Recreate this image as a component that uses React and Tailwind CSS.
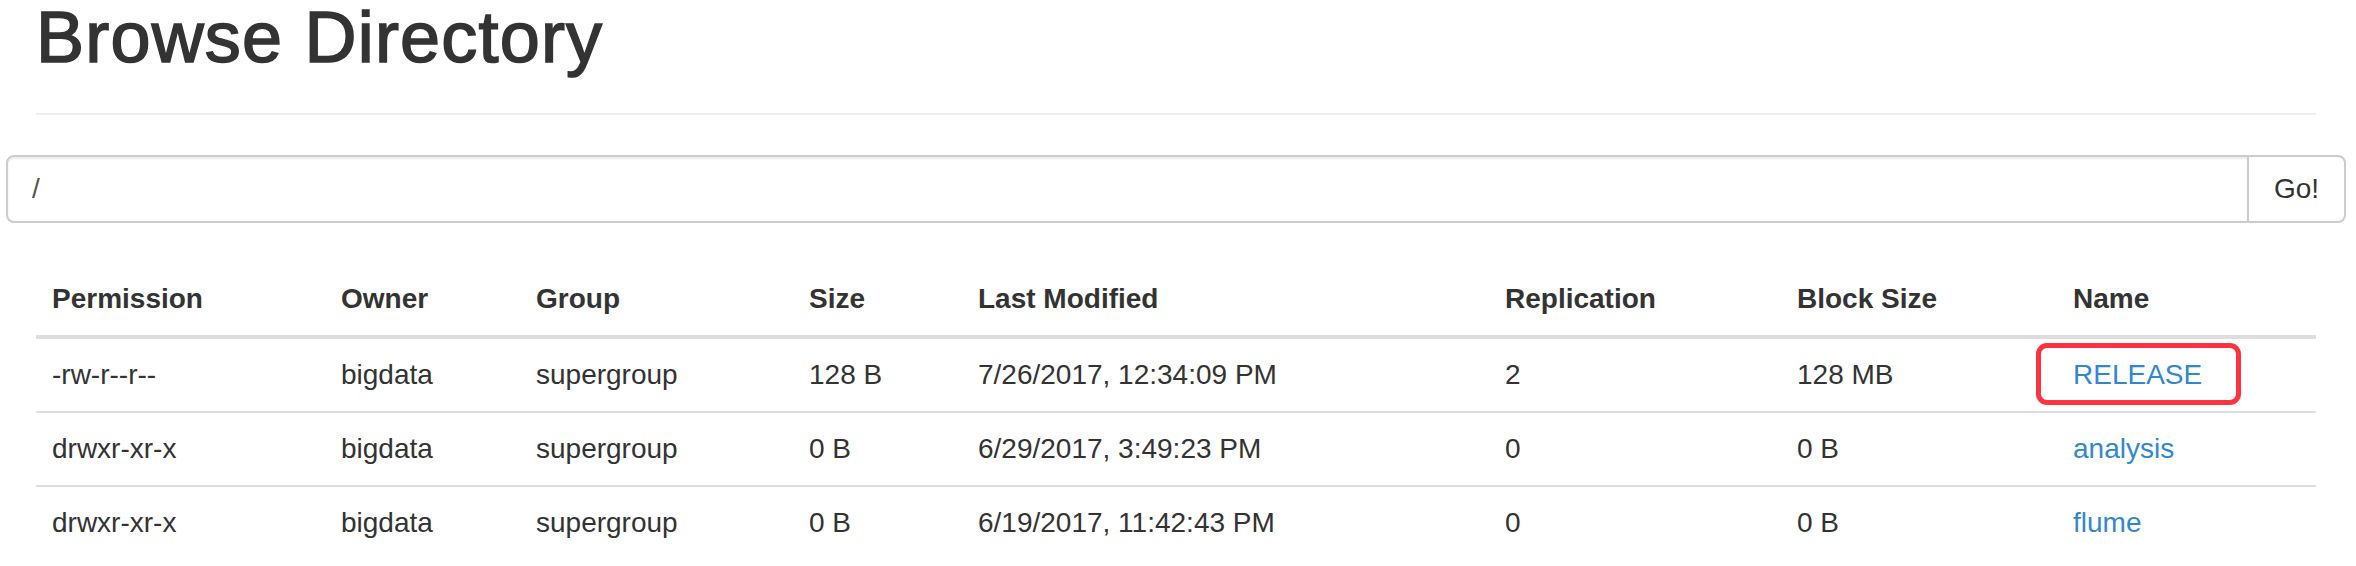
import React from "react";

const columns = [
  { label: "Permission", width: "w-[289px]" },
  { label: "Owner", width: "w-[195px]" },
  { label: "Group", width: "w-[273px]" },
  { label: "Size", width: "w-[169px]" },
  { label: "Last Modified", width: "w-[527px]" },
  { label: "Replication", width: "w-[292px]" },
  { label: "Block Size", width: "w-[276px]" },
  { label: "Name", width: "w-[259px]" },
];

const files = [
  {
    permission: "-rw-r--r--",
    owner: "bigdata",
    group: "supergroup",
    size: "128 B",
    modified: "7/26/2017, 12:34:09 PM",
    replication: "2",
    blockSize: "128 MB",
    name: "RELEASE",
    highlight: true,
  },
  {
    permission: "drwxr-xr-x",
    owner: "bigdata",
    group: "supergroup",
    size: "0 B",
    modified: "6/29/2017, 3:49:23 PM",
    replication: "0",
    blockSize: "0 B",
    name: "analysis",
  },
  {
    permission: "drwxr-xr-x",
    owner: "bigdata",
    group: "supergroup",
    size: "0 B",
    modified: "6/19/2017, 11:42:43 PM",
    replication: "0",
    blockSize: "0 B",
    name: "flume",
  },
];

export default function App() {
  return (
    <div className="min-h-screen bg-white text-[#333] font-['Liberation_Sans',Arial,sans-serif] text-[28px] leading-[40px]">
      <div className="w-[2340px] ml-[6px] px-[30px]">

        {/* PAGE HEADER */}
        <h1 className="text-[72px] leading-[72px] pt-px font-medium tracking-[1.2px] [-webkit-text-stroke:1.6px_#333] mb-[40px]">
          Browse Directory
        </h1>
        <hr className="border-0 border-t-2 border-[#eee] mb-[40px]" />

        {/* PATH INPUT */}
        <div className="-mx-[30px] flex h-[68px]">
          <input
            type="text"
            defaultValue="/"
            className="flex-1 min-w-0 h-full border-2 border-[#ccc] rounded-l-[8px] px-[24px] text-[28px] text-[#555] shadow-[inset_0_2px_2px_rgba(0,0,0,0.075)] outline-none"
          />
          <button className="shrink-0 w-[97px] h-full border-2 border-l-0 border-[#ccc] rounded-r-[8px] bg-white text-[#333] text-[28px] text-center">
            Go!
          </button>
        </div>

        {/* FILE TABLE */}
        <table className="w-full table-fixed border-collapse mt-[40px]">
          <thead>
            <tr>
              {columns.map((c) => (
                <th
                  key={c.label}
                  className={`${c.width} text-left font-bold p-[16px] border-b-4 border-[#ddd]`}
                >
                  {c.label}
                </th>
              ))}
            </tr>
          </thead>
          <tbody>
            {files.map((f, i) => (
              <tr key={f.name} className={i > 0 ? "border-t-2 border-[#ddd]" : ""}>
                <td className="p-[16px]">{f.permission}</td>
                <td className="p-[16px]">{f.owner}</td>
                <td className="p-[16px]">{f.group}</td>
                <td className="p-[16px]">{f.size}</td>
                <td className="p-[16px]">{f.modified}</td>
                <td className="p-[16px]">{f.replication}</td>
                <td className="p-[16px]">{f.blockSize}</td>
                <td className="p-[16px] relative">
                  {f.highlight && (
                    <span className="absolute left-[-21px] top-[4px] w-[205px] h-[62px] border-[5px] border-[#fe3340] rounded-[11px]" />
                  )}
                  <a href="#" className="relative text-[#3288d0]">
                    {f.name}
                  </a>
                </td>
              </tr>
            ))}
          </tbody>
        </table>
      </div>
    </div>
  );
}
